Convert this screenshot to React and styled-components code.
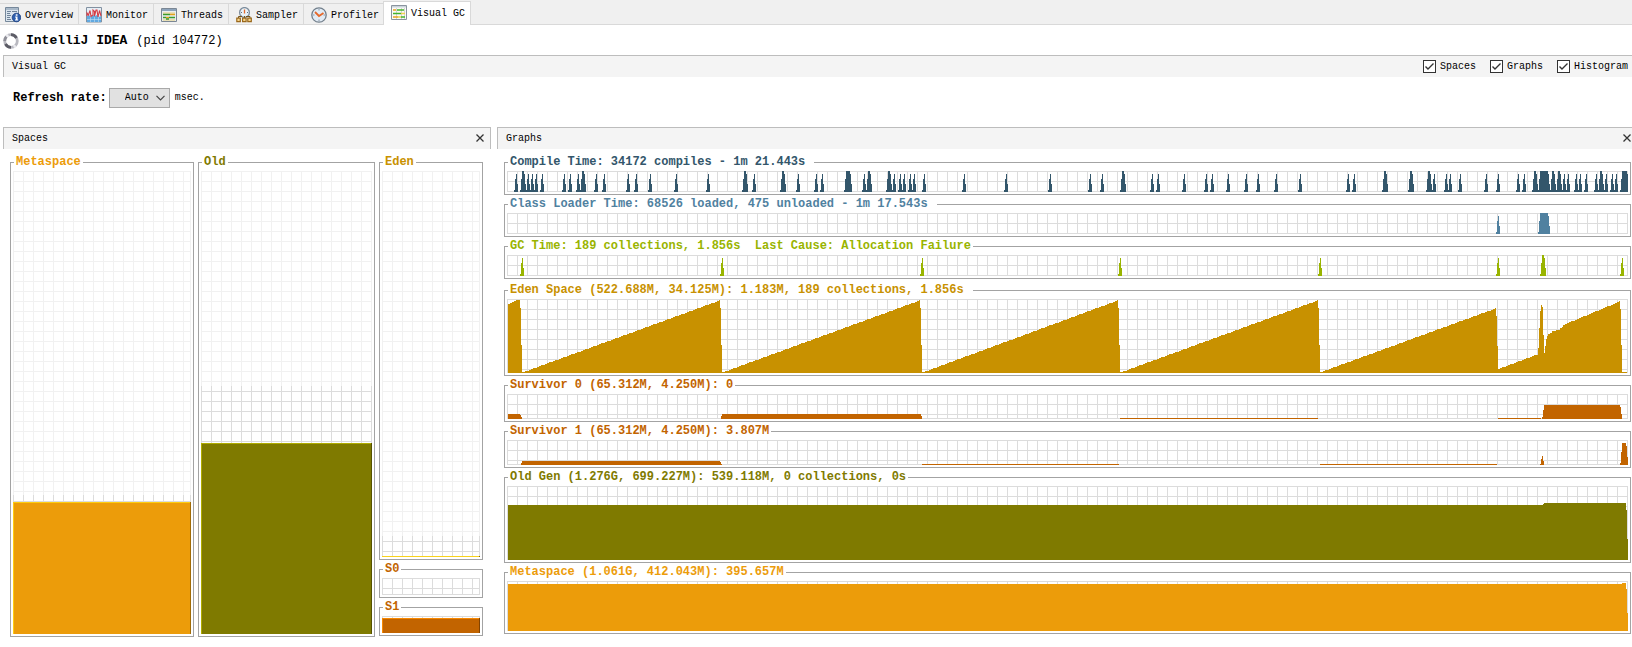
import React from "react";
import styled, { createGlobalStyle } from "styled-components";

const color = {
  line: "#a3a3a3",
  compile: "#33566b",
  loader: "#5081a0",
  gc: "#99b400",
  eden: "#c89100",
  survivor: "#c26400",
  old: "#7f7a00",
  meta: "#ec9c0a",
};

const GlobalStyle = createGlobalStyle`
  *, *::before, *::after { box-sizing: border-box; }
  body {
    margin: 0;
    background: #fff;
    color: #000;
    font: 10px/14px "Liberation Mono", "Courier New", monospace;
  }
  button, select, input { font: inherit; color: inherit; }
`;

/* ---------- tabs and header ---------- */

const TabStrip = styled.nav`
  display: flex;
  align-items: flex-end;
  height: 25px;
  background: #f0f0f0;
  box-shadow: inset 0 -1px #d9d9d9;
`;

const Tab = styled.button`
  display: flex;
  align-items: center;
  gap: 4px;
  height: ${(p) => (p.$active ? 24 : 22)}px;
  margin: 0 0 0 ${(p) => (p.$active ? -2 : 0)}px;
  padding: ${(p) => (p.$active ? "0 5px 2px 7px" : "0 5px 0 7px")};
  border: solid #d9d9d9;
  border-width: ${(p) => (p.$active ? "1px 1px 0 1px" : "1px 1px 0 0")};
  background: ${(p) => (p.$active ? "#fff" : "transparent")};
  white-space: nowrap;
  &:first-child { padding-left: 5px; }
`;

const TabLabel = styled.span`
  padding-top: 2px;
`;

const TabIcon = styled.svg`
  width: 16px;
  height: 16px;
  flex: none;
`;

const Title = styled.h1`
  display: flex;
  align-items: center;
  gap: 7px;
  height: 30px;
  margin: 0;
  padding: 2px 0 0 3px;
  font-size: 13px;
  line-height: 16px;
`;

const Pid = styled.span`
  font-size: 12px;
  font-weight: 400;
  margin-left: 1px;
`;

const Bar = styled.header`
  display: flex;
  align-items: center;
  justify-content: space-between;
  height: 22px;
  padding: 0 1px 0 8px;
  border: solid #bdbdbd;
  border-width: 1px ${(p) => (p.$closed ? 1 : 0)}px 0 1px;
  background: #f4f4f4;
`;

const BarTitle = styled.h2`
  margin: 0;
  font-size: 10px;
  font-weight: 400;
`;

const Main = styled.main`
  padding-left: 3px;
`;

const Checks = styled.div`
  display: flex;
  gap: 14px;
  padding-right: 3px;
`;

const Check = styled.label`
  display: flex;
  align-items: center;
  gap: 4px;
`;

const CheckBox = styled.span`
  display: grid;
  width: 13px;
  height: 13px;
  > * { grid-area: 1 / 1; width: 13px; height: 13px; margin: 0; }
  svg { pointer-events: none; visibility: hidden; }
  input { appearance: none; border: 1px solid #333; background: #fff; }
  input:checked + svg { visibility: visible; }
`;

const RefreshRow = styled.div`
  display: flex;
  align-items: center;
  height: 50px;
  padding: 0 10px 8px;
`;

const RefreshLabel = styled.label`
  margin-right: 2px;
  font-size: 12px;
  font-weight: 700;
`;

const SelectBox = styled.span`
  display: grid;
  align-items: center;
  margin-right: 5px;
  select {
    grid-area: 1 / 1;
    appearance: none;
    width: 61px;
    height: 20px;
    padding: 0 0 0 15px;
    border: 1px solid #a9a9a9;
    border-radius: 0;
    background: #e1e1e1;
  }
  svg {
    grid-area: 1 / 1;
    justify-self: end;
    width: 9px;
    height: 6px;
    margin-right: 5px;
    pointer-events: none;
  }
`;

const CloseButton = styled.button`
  display: grid;
  place-items: center;
  width: ${(p) => (p.$inset ? 18 : 8)}px;
  height: 16px;
  margin: 0;
  padding: 0 0 2px;
  border: 0;
  background: none;
  svg { width: 8px; height: 8px; }
`;

/* ---------- panels ---------- */

const Panels = styled.div`
  display: grid;
  grid-template-columns: minmax(0, 488fr) minmax(0, 1135fr);
  gap: 6px;
`;

const SpacesBody = styled.div`
  display: grid;
  grid-template-columns: minmax(0, 184fr) minmax(0, 177fr) minmax(0, 104fr);
  align-items: start;
  gap: 4px;
  padding: 4px 8px 0 7px;
`;

const GraphsBody = styled.div`
  padding: 4px 1px 13px 7px;
`;

const Group = styled.fieldset`
  min-width: 0;
  margin: ${(p) => p.$gap || 0}px 0 0;
  padding: 0 2px 2px;
  border: 1px solid ${color.line};
`;

const GroupTitle = styled.legend`
  height: 18px;
  margin-left: 1px;
  padding: 0 2px;
  color: ${(p) => p.$color};
  font-size: 12px;
  font-weight: 700;
  line-height: 18px;
  white-space: pre;
`;

const grid = (c) => `
  background-image: linear-gradient(to right, ${c} 1px, transparent 1px),
    linear-gradient(to bottom, ${c} 1px, transparent 1px);
  background-size: 10px 10px;
`;

const Plot = styled.div`
  height: ${(p) => p.$h}px;
  ${grid("#dcdcdc")}
  box-shadow: inset -1px -1px #dcdcdc;
  svg { display: block; width: 100%; height: 100%; }
`;

const Column = styled.div`
  display: flex;
  flex-direction: column;
  height: ${(p) => p.$h}px;
`;

const Reserved = styled.div`
  flex: 1;
  ${grid("#f1f1f1")}
  box-shadow: inset -1px 0 #f1f1f1;
`;

const Committed = styled.div`
  height: ${(p) => p.$h}px;
  ${grid("#dcdcdc")}
  background-position: 0 ${(p) => p.$phase || 0}px;
  box-shadow: inset -1px 0 #dcdcdc;
  ${(p) => p.$closed && "border-bottom: 1px solid #dcdcdc;"}
`;

const Used = styled.div`
  height: ${(p) => p.$h}px;
  background: ${(p) => p.$fill};
  box-shadow: inset -1px 0 ${(p) => p.$dark}, inset 1px 1px ${(p) => p.$light};
`;

/* ---------- chart data: x runs from 0 to 1121, one step per sample ---------- */

const WIDTH = 1121;

// [start, width] of each activity peak; a width of 4 is a single sample
const singles = (list) => list.map((x) => [x, 4]);

const compilePeaks = [
  ...singles([
    7, 19, 23, 27, 33, 55, 61, 69, 87, 95, 119, 127, 141, 167, 199, 245, 289, 307, 313,
    355, 385, 391, 395, 401, 405, 415, 455, 497, 541, 581, 593, 643, 649, 675, 697, 703,
    719, 737, 749, 767, 791, 839, 845, 925, 937, 941, 951, 977, 989, 1009, 1015, 1055,
    1059, 1067, 1071, 1077, 1087, 1097, 1103, 1107,
  ]),
  ...[13, 73, 235, 273, 359, 379, 613, 875, 901, 919, 1025, 1043, 1049, 1091].map((x) => [x, 6]),
  [337, 8],
  [1031, 12],
  [1113, 9],
];
const loaderPeaks = [[989, 4], [1031, 12]];
const gcPeaks = [...singles([13, 213, 413, 611, 811, 989, 1113]), [1033, 6]];

function peaksPath(peaks, h) {
  return peaks
    .map(([x, w]) => {
      const top = w > 4 ? 0 : 3;
      const flat = w > 4 ? w - 4 : 0;
      return `M${x} ${h}v-2h1V${h - 13}h1V${top}h${flat || 1}${
        flat ? "V3h1" : ""
      }V${h - 8}h1V${h}z`;
    })
    .join("");
}

// [x, height] steps, each held until the next x
function stepsPath(steps, h) {
  let d = `M${steps[0][0]} ${h}`;
  steps.forEach(([x, v]) => {
    d += `H${x}V${h - v}`;
  });
  return `${d}V${h}z`;
}

function ramp(x0, v0, x1, v1) {
  const out = [];
  for (let x = x0; x < x1; x += 2) {
    out.push([x, Math.round(v0 + ((v1 - v0) * (x - x0)) / (x1 - x0))]);
  }
  return out;
}

const drop = (x) => [[x, 65], [x + 1, 28], [x + 2, 1]];

const edenSteps = [
  [1, 69], [3, 70], [5, 71], [7, 72], [9, 73],
  ...drop(13), ...ramp(16, 1, 213, 73),
  ...drop(213), ...ramp(216, 1, 413, 73),
  ...drop(413), ...ramp(416, 1, 611, 73),
  ...drop(611), ...ramp(614, 1, 811, 73),
  ...drop(811), ...ramp(816, 2, 989, 65),
  [989, 57], [990, 27], ...ramp(991, 4, 1031, 19),
  [1031, 25], [1032, 45], [1033, 62], [1034, 68], [1035, 66], [1036, 38], [1037, 20],
  [1038, 27], [1039, 34], [1040, 37], [1041, 39], [1043, 40], [1045, 42], [1049, 43],
  [1053, 45], [1055, 46], [1056, 48], [1058, 49],
  ...ramp(1060, 50, 1113, 72),
  [1113, 64], [1114, 28], [1115, 1], [1120, 0],
];

const survivor0Steps = [
  [1, 5], [13, 4], [14, 2], [15, 0], [214, 3], [215, 5], [414, 3], [415, 0],
  [613, 1], [811, 0], [991, 1], [1034, 0], [1035, 2], [1036, 9], [1037, 14],
  [1113, 12], [1114, 5], [1115, 0],
];

const survivor1Steps = [
  [14, 2], [15, 4], [213, 3], [214, 1], [215, 0], [415, 1], [612, 0], [813, 1], [990, 0],
  [1033, 1], [1034, 6], [1035, 9], [1036, 4], [1037, 0],
  [1113, 2], [1114, 13], [1115, 22], [1119, 19], [1120, 8], [1121, 0],
];

const oldSteps = [[1, 55], [1036, 56], [1037, 57], [1119, 50], [1120, 21], [1121, 0]];
const metaSteps = [[1, 47], [1115, 48], [1119, 42], [1120, 18], [1121, 0]];

const graphs = [
  { title: "Compile Time: 34172 compiles - 1m 21.443s ", fill: color.compile, h: 21, peaks: compilePeaks },
  { title: "Class Loader Time: 68526 loaded, 475 unloaded - 1m 17.543s ", fill: color.loader, h: 21, peaks: loaderPeaks },
  { title: "GC Time: 189 collections, 1.856s  Last Cause: Allocation Failure", fill: color.gc, h: 21, peaks: gcPeaks },
  { title: "Eden Space (522.688M, 34.125M): 1.183M, 189 collections, 1.856s ", fill: color.eden, h: 74, steps: edenSteps, gap: 2 },
  { title: "Survivor 0 (65.312M, 4.250M): 0", fill: color.survivor, h: 25, steps: survivor0Steps },
  { title: "Survivor 1 (65.312M, 4.250M): 3.807M", fill: color.survivor, h: 25, steps: survivor1Steps },
  { title: "Old Gen (1.276G, 699.227M): 539.118M, 0 collections, 0s", fill: color.old, h: 74, steps: oldSteps },
  { title: "Metaspace (1.061G, 412.043M): 395.657M", fill: color.meta, h: 50, steps: metaSteps },
];

function Graph({ title, fill, h, peaks, steps, gap }) {
  return (
    <Group $gap={gap}>
      <GroupTitle $color={fill}>{title}</GroupTitle>
      <Plot $h={h}>
        <svg viewBox={`0 0 ${WIDTH} ${h}`} preserveAspectRatio="none" shapeRendering="crispEdges" aria-hidden="true">
          <path fill={fill} d={peaks ? peaksPath(peaks, h) : stepsPath(steps, h)} />
        </svg>
      </Plot>
    </Group>
  );
}

/* ---------- icons ---------- */

const OverviewIcon = () => (
  <TabIcon viewBox="0 0 16 16">
    <path d="M.5.5h13v14H.5z" fill="#dbe5ee" stroke="#76889b" />
    <path d="M1 1h12v2H1z" fill="#a9b9c9" />
    <path d="M2 4.500h4M2 6.500h3M2 8.500h4M2 10.500h3M2 12.500h4M7 4.500h5" stroke="#6f8399" />
    <circle cx="11.500" cy="10.500" r="4.300" fill="#2d5fae" stroke="#1c3f80" strokeWidth=".8" />
    <path d="M10.700 7.300h1.800v1.500h-1.800zM10.100 9.600h2.400v3h.7v1H10v-1h.8v-2h-.7z" fill="#fff" />
  </TabIcon>
);

const MonitorIcon = () => (
  <TabIcon viewBox="0 0 16 16">
    <path d="M.5.5h15v14.500H.5z" fill="#e6eef5" stroke="#8291a1" />
    <path d="M1 9l2-1 2 2 2-2 2 1 2-1 2 2 2-1v6H1z" fill="#62a9e0" />
    <path d="M1 12.500h14M4.500 10v5M8.500 10v5M12.500 10v5" stroke="#c3dff4" strokeWidth=".6" />
    <path d="M1 9V6l1.500 2L4 3.500l1 6L7 8V3l1.500 1.500V9L10 3h1l1 7 1.500-6.500L15 9" fill="none" stroke="#d63d45" strokeWidth="1.100" />
  </TabIcon>
);

const ThreadsIcon = () => (
  <TabIcon viewBox="0 0 16 16">
    <path d="M.5 1.500h15v13H.5z" fill="#e9eef0" stroke="#7b8794" />
    <path d="M1 2h14v2H1z" fill="#8ca3bb" />
    <path d="M2 6h12M2 13h12" stroke="#e8cf7a" />
    <path d="M2 7.500h7M2 10.500h3" stroke="#3b9a2c" strokeWidth="1.300" />
    <path d="M9 7.500h5M5 10.500h3" stroke="#e3a11c" strokeWidth="1.300" />
    <path d="M8 10.500h6M5 12h3" stroke="#3b9a2c" strokeWidth="1.300" />
  </TabIcon>
);

const SamplerIcon = () => (
  <TabIcon viewBox="0 0 16 16">
    <circle cx="8.500" cy="5.500" r="4.900" fill="#eaf1f7" stroke="#7c8c9b" strokeWidth="1.300" />
    <path d="M8.500 2.500v4" stroke="#e0692d" strokeWidth="1.300" />
    <path d="M5 5.500h1M11 5.500h1" stroke="#5d6e7e" />
    <path d="M2.500 11V9.500H6M10 9.500h4V11M8.500 9v2" fill="none" stroke="#75531a" />
    <path d="M.8 11.200h3.500v3.500H.8zM6.600 11.200h3.500v3.500H6.600zM11.800 11.200h3.500v3.500h-3.500z" fill="#f7d58a" stroke="#9a681c" strokeWidth="1.200" />
  </TabIcon>
);

const ProfilerIcon = () => (
  <TabIcon viewBox="0 0 16 16">
    <circle cx="8" cy="8" r="7.200" fill="#e1ebf5" stroke="#727f8b" strokeWidth="1.300" />
    <path d="M8 2v1.500M8 12.500V14M2 8h1.500M12.500 8H14" stroke="#8796a5" />
    <path d="M4 5l4 4 4.500-3" fill="none" stroke="#e5692c" strokeWidth="1.800" />
  </TabIcon>
);

const GcIcon = () => (
  <TabIcon viewBox="0 0 16 16">
    <path d="M.5.5h15v14H.5z" fill="#fbfbf7" stroke="#8a949e" />
    <path d="M1 1h14v1.500H1z" fill="#c9d2da" />
    <path d="M5.500 3v11M10.500 3v11M13.500 3v11" stroke="#d4d4d4" />
    <path d="M2 5h3M2 12h5" stroke="#e9a11f" strokeWidth="1.300" />
    <path d="M6 5h7M2 8.500h8M10 12h4" stroke="#45b52c" strokeWidth="1.300" />
    <path d="M10 8.500h4M7 12h3" stroke="#f0d44d" strokeWidth="1.300" />
  </TabIcon>
);

const SpinnerIcon = () => (
  <TabIcon viewBox="0 0 16 16" fill="none" strokeWidth="2.800">
    <circle cx="8" cy="8" r="6.300" stroke="#b9b9c0" />
    <path d="M1.700 8A6.300 6.300 0 0 1 3.300 3.800" stroke="#8f8f98" />
    <path d="M2.500 11A6.300 6.300 0 0 0 8 14.300" stroke="#5c5c66" />
    <path d="M8 1.700A6.300 6.300 0 0 1 13.500 5" stroke="#5c5c66" />
    <path d="M3.500 3.600A6.300 6.300 0 0 1 5.500 2.200M12.500 12.400A6.300 6.300 0 0 1 10.500 13.800" stroke="#ececf0" />
  </TabIcon>
);

const tabs = [
  ["Overview", OverviewIcon],
  ["Monitor", MonitorIcon],
  ["Threads", ThreadsIcon],
  ["Sampler", SamplerIcon],
  ["Profiler", ProfilerIcon],
  ["Visual GC", GcIcon],
];

const Close = ({ label, inset }) => (
  <CloseButton type="button" aria-label={label} $inset={inset}>
    <svg viewBox="0 0 8 8">
      <path d="M.5.5l7 7M7.500.5l-7 7" stroke="#333" strokeWidth="1.300" />
    </svg>
  </CloseButton>
);

export default function App() {
  return (
    <>
      <GlobalStyle />
      <TabStrip role="tablist">
        {tabs.map(([name, Icon]) => (
          <Tab key={name} type="button" role="tab" aria-selected={name === "Visual GC"} $active={name === "Visual GC"}>
            <Icon />
            <TabLabel>{name}</TabLabel>
          </Tab>
        ))}
      </TabStrip>
      <Title>
        <SpinnerIcon />
        <span>
          IntelliJ IDEA <Pid>(pid 104772)</Pid>
        </span>
      </Title>
      <Main>
        <Bar>
          <BarTitle>Visual GC</BarTitle>
          <Checks>
            {["Spaces", "Graphs", "Histogram"].map((name) => (
              <Check key={name}>
                <CheckBox>
                  <input type="checkbox" defaultChecked />
                  <svg viewBox="0 0 13 13">
                    <path d="M2.500 6.500l2.500 2.500 5.500-5.500" fill="none" stroke="#333" strokeWidth="1.400" />
                  </svg>
                </CheckBox>
                {name}
              </Check>
            ))}
          </Checks>
        </Bar>
        <RefreshRow>
          <RefreshLabel htmlFor="rate">Refresh rate:</RefreshLabel>
          <SelectBox>
            <select id="rate" defaultValue="Auto">
              <option>Auto</option>
              <option>100</option>
              <option>500</option>
              <option>1000</option>
            </select>
            <svg viewBox="0 0 9 6">
              <path d="M.5.8l4 4 4-4" fill="none" stroke="#444" strokeWidth="1.200" />
            </svg>
          </SelectBox>
          msec.
        </RefreshRow>
        <Panels>
          <section>
            <Bar $closed>
              <BarTitle>Spaces</BarTitle>
              <Close label="Close Spaces" inset />
            </Bar>
            <SpacesBody>
              <Group>
                <GroupTitle $color={color.meta}>Metaspace</GroupTitle>
                <Column $h={463}>
                  <Reserved />
                  <Committed $h={7} $phase={6} />
                  <Used $h={132} $fill={color.meta} $light="#ffcc10" $dark="#a06b08" />
                </Column>
              </Group>
              <Group>
                <GroupTitle $color={color.old}>Old</GroupTitle>
                <Column $h={463}>
                  <Reserved />
                  <Committed $h={57} $phase={5} />
                  <Used $h={191} $fill={color.old} $light="#b0ac00" $dark="#565300" />
                </Column>
              </Group>
              <div>
                <Group>
                  <GroupTitle $color={color.eden}>Eden</GroupTitle>
                  <Column $h={386}>
                    <Reserved />
                    <Committed $h={20} $phase={5} />
                    <Used $h={1} $fill="#f8d21c" $light="#f8d21c" $dark="#8a6400" />
                  </Column>
                </Group>
                <Group>
                  <GroupTitle $color={color.survivor}>S0</GroupTitle>
                  <Column $h={17}>
                    <Committed $h={17} $closed />
                  </Column>
                </Group>
                <Group>
                  <GroupTitle $color={color.survivor}>S1</GroupTitle>
                  <Column $h={17}>
                    <Committed $h={2} />
                    <Used $h={15} $fill={color.survivor} $light="#f88800" $dark="#824300" />
                  </Column>
                </Group>
              </div>
            </SpacesBody>
          </section>
          <section>
            <Bar>
              <BarTitle>Graphs</BarTitle>
              <Close label="Close Graphs" />
            </Bar>
            <GraphsBody>
              {graphs.map((g) => (
                <Graph key={g.title} {...g} />
              ))}
            </GraphsBody>
          </section>
        </Panels>
      </Main>
    </>
  );
}
